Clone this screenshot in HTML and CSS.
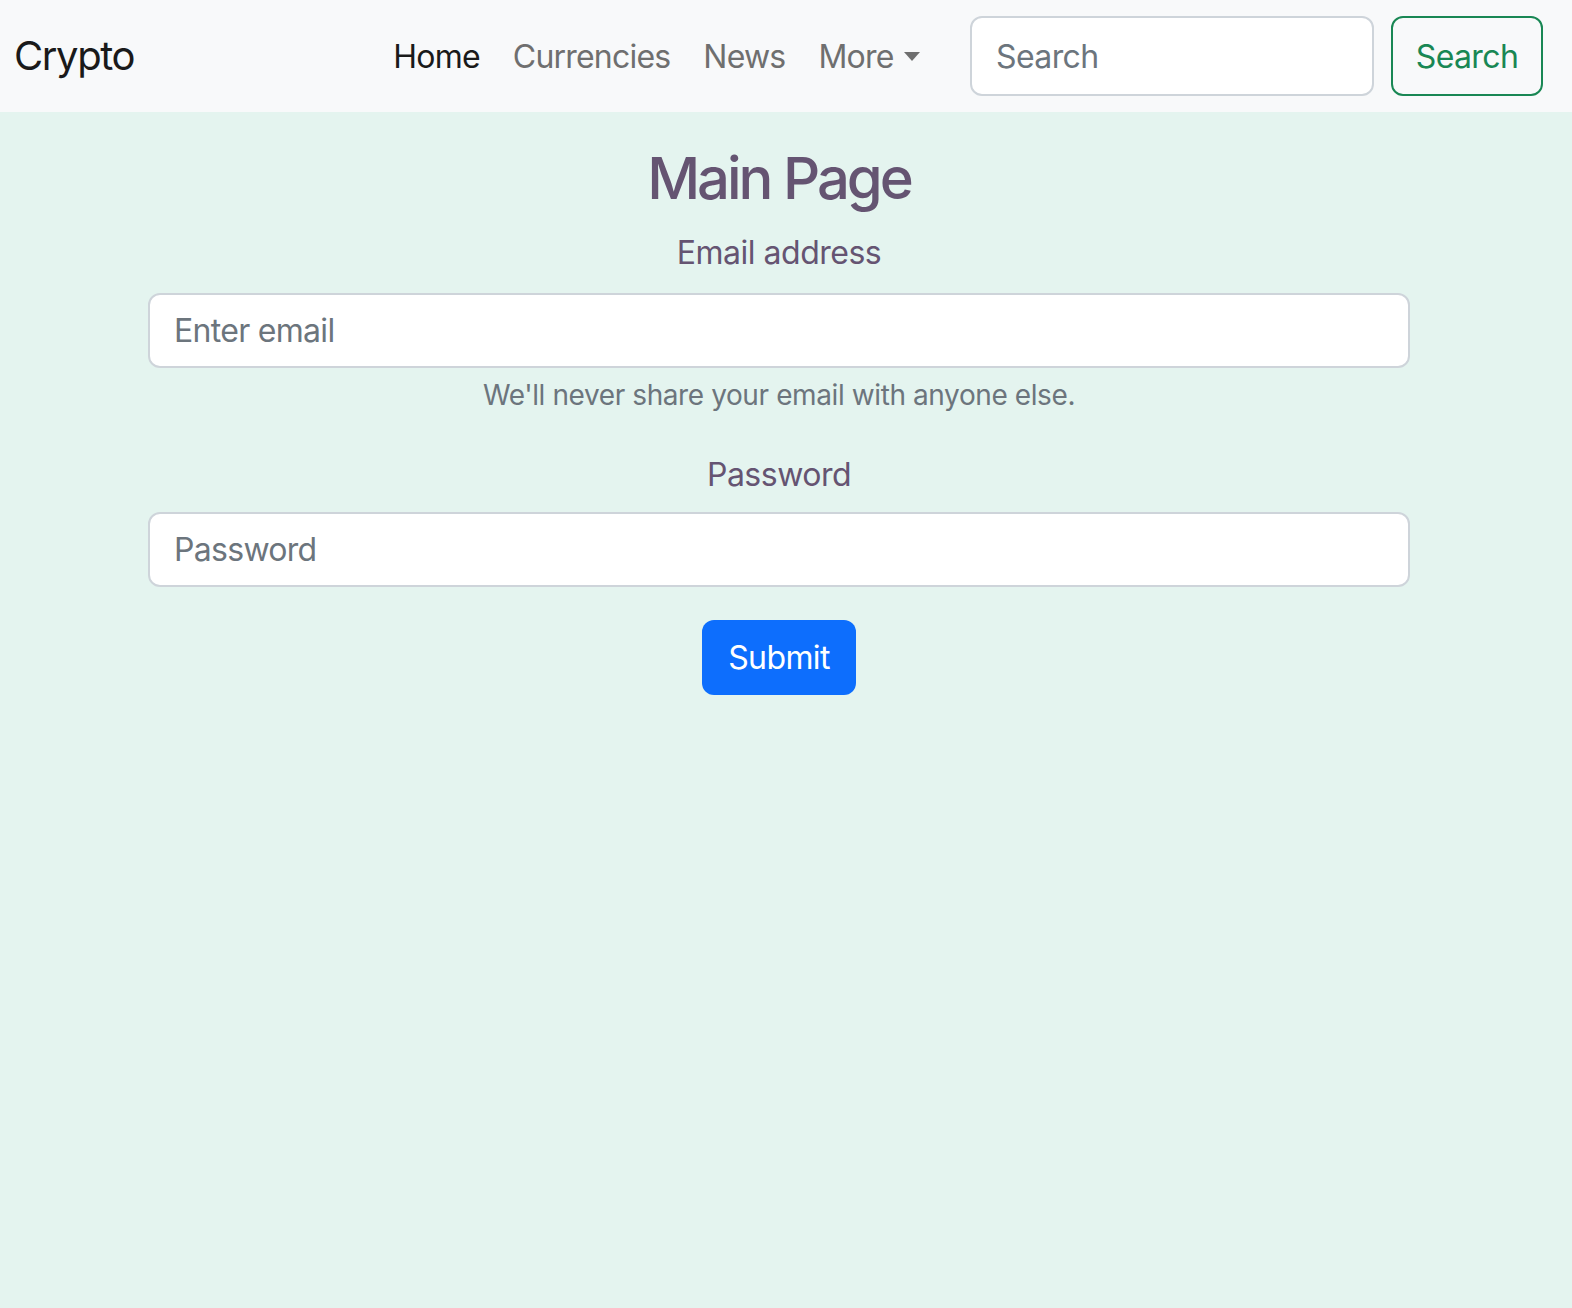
FILE: index.html
```html
<!DOCTYPE html>
<html lang="en">
<head>
<meta charset="utf-8">
<title>Crypto</title>
<link rel="stylesheet" href="styles.css">
</head>
<body>
<nav class="navbar">
  <a class="brand" href="#">Crypto</a>
  <ul class="nav">
    <li><a class="nav-link active" href="#">Home</a></li>
    <li><a class="nav-link" href="#">Currencies</a></li>
    <li><a class="nav-link" href="#">News</a></li>
    <li><a class="nav-link dropdown" href="#">More<span class="caret"></span></a></li>
  </ul>
  <form class="search-form">
    <input class="search-input" type="search" placeholder="Search">
    <button class="btn-outline" type="button">Search</button>
  </form>
</nav>
<main class="main">
  <h2 class="title">Main Page</h2>
  <form class="login">
    <div class="group group-email">
      <label class="label" for="email">Email address</label>
      <input class="control" id="email" type="email" placeholder="Enter email">
      <div class="help">We'll never share your email with anyone else.</div>
    </div>
    <div class="group group-pw">
      <label class="label" for="pw">Password</label>
      <input class="control" id="pw" type="password" placeholder="Password">
    </div>
    <button class="btn-primary" type="button">Submit</button>
  </form>
</main>
</body>
</html>
```
FILE: styles.css
```css
* { box-sizing: border-box; }
html, body { margin: 0; padding: 0; }
body {
  font-family: Inter, "Noto Sans", "Liberation Sans", sans-serif;
  background: #e4f4ef;
  min-height: 1308px;
  color: #212529;
}
.navbar {
  height: 112px;
  background: #f8f9fa;
  display: flex;
  align-items: center;
  padding: 0 29px 0 14px;
}
.brand {
  font-size: 40px;
  letter-spacing: -1.4px;
  color: #1a1a1a;
  text-decoration: none;
  line-height: 1;
}
.nav {
  list-style: none;
  margin: 0 0 0 auto;
  padding: 0;
  display: flex;
}
.nav-link {
  display: flex;
  align-items: center;
  font-size: 32px;
  letter-spacing: -0.8px;
  padding: 0 16.5px;
  color: #6f6f6f;
  text-decoration: none;
}
.nav-link.active { color: #1a1a1a; }
.caret {
  display: inline-block;
  margin-left: 10px;
  width: 0;
  height: 0;
  border-left: 8px solid transparent;
  border-right: 8px solid transparent;
  border-top: 9px solid #6f6f6f;
}
.search-form {
  display: flex;
  margin-left: 34px;
}
.search-input {
  width: 404px;
  height: 80px;
  border: 2px solid #ced4da;
  border-radius: 12px;
  background: #fff;
  font: inherit;
  font-size: 32px;
  letter-spacing: -0.6px;
  padding: 0 24px;
  color: #212529;
}
.search-input::placeholder { color: #6c757d; }
.btn-outline {
  margin-left: 17px;
  width: 152px;
  height: 80px;
  border: 2px solid #198754;
  border-radius: 12px;
  background: transparent;
  color: #198754;
  font: inherit;
  font-size: 32px;
  letter-spacing: -0.6px;
}
.main {
  width: 1558px;
  text-align: center;
}
.title {
  margin: 32px 0 15px;
  font-size: 58px;
  letter-spacing: -3px;
  font-weight: 500;
  line-height: 1.2;
  color: #655472;
}
.login {
  width: 1262px;
  margin: 0 auto;
}
.group-email { margin-bottom: 35px; }
.group-pw { margin-bottom: 33px; }
.label {
  display: block;
  font-size: 32px;
  letter-spacing: -0.5px;
  line-height: 48px;
  color: #655472;
  margin-bottom: 16px;
}
.group-pw .label { margin-bottom: 13px; }
.control {
  display: block;
  width: 100%;
  height: 75px;
  border: 2px solid #ced4da;
  border-radius: 12px;
  background: #fff;
  font: inherit;
  font-size: 32px;
  letter-spacing: -0.7px;
  padding: 0 24px;
  color: #212529;
}
.control::placeholder { color: #6c757d; }
.help {
  margin-top: 6px;
  font-size: 28px;
  letter-spacing: -0.4px;
  line-height: 42px;
  color: #6c757d;
}
.btn-primary {
  width: 154px;
  height: 75px;
  border: none;
  border-radius: 12px;
  background: #0d6efd;
  color: #fff;
  font: inherit;
  font-size: 32px;
  letter-spacing: -0.6px;
}
```
